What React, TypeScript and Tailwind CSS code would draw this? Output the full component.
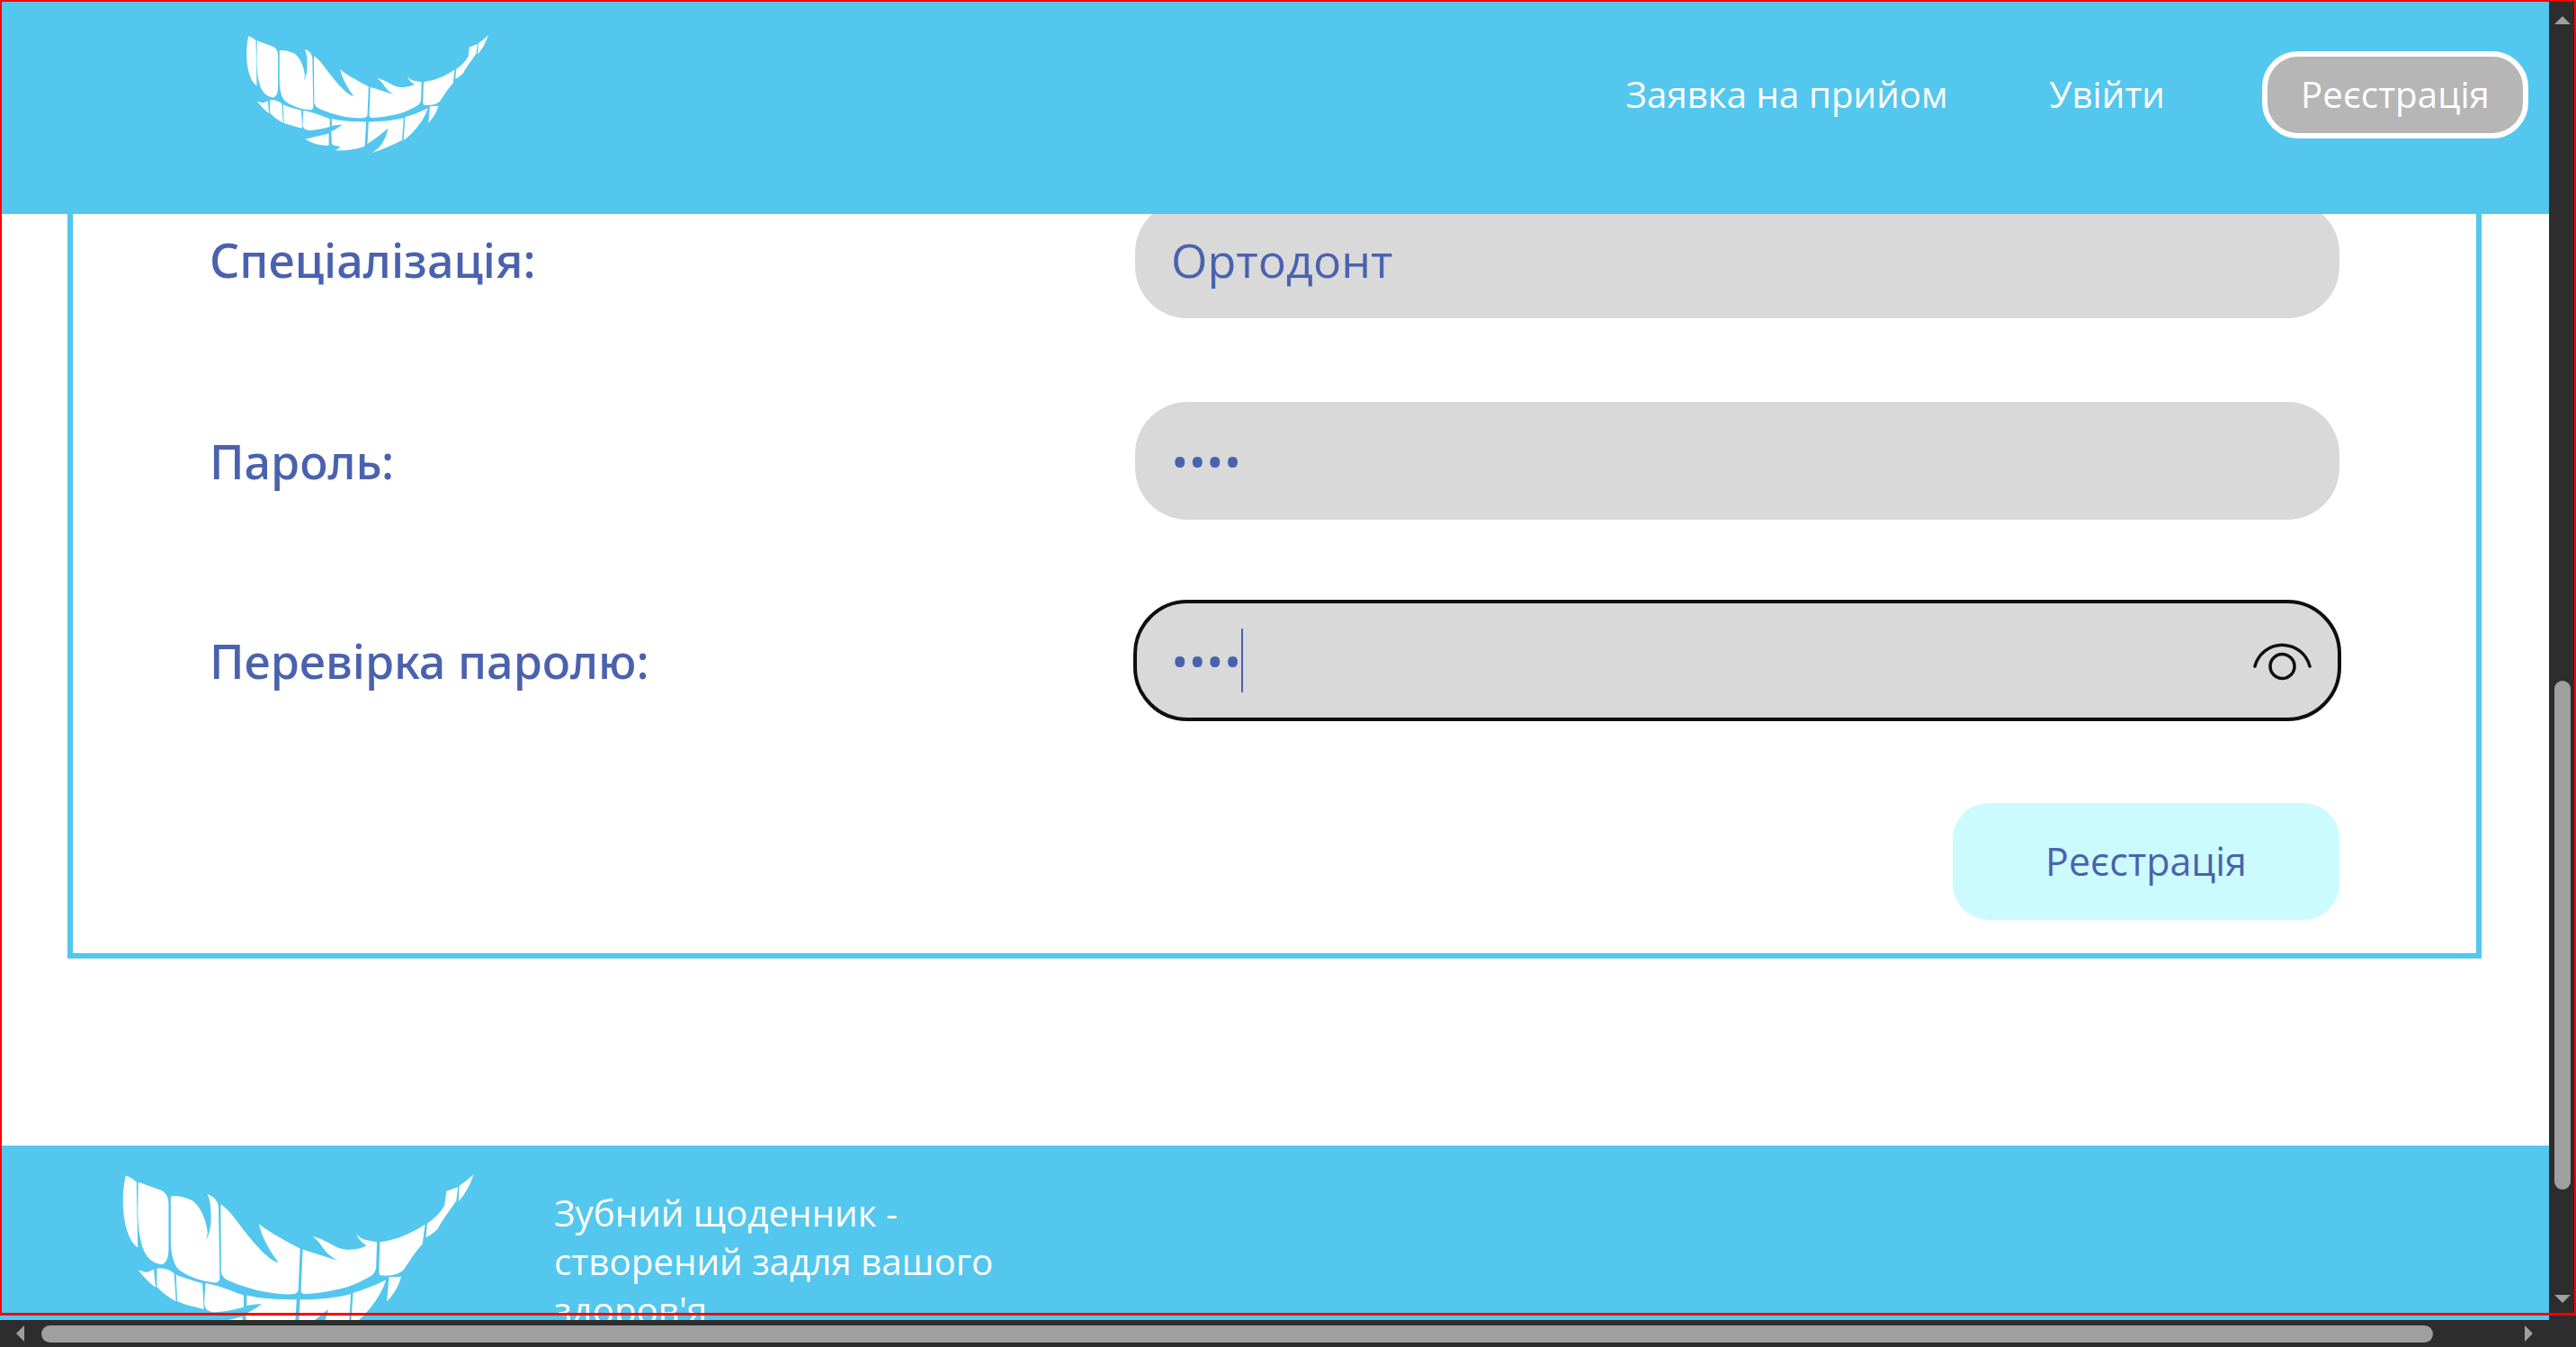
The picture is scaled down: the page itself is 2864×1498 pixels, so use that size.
const Logo = ({ className }: { className: string }) => (
  <svg viewBox="215 115 815 400" className={className} fill="#ffffff">
    <path d="M226,122 C236,125 245,130 251,137 L254,288 C235,275 222,240 220,190 C219,165 222,140 226,122Z" />
    <path d="M255,137 L305,155 C318,160 324,170 325,185 L325,290 C325,310 320,325 308,327 C290,325 275,312 268,295 C258,270 254,240 254,200Z" />
    <path d="M330,170 C340,167 360,170 380,180 C400,195 412,225 415,255 L411,270 C422,255 424,225 422,205 C422,190 420,175 414,165 C428,170 438,178 440,195 L443,360 C441,368 435,370 425,368 C400,365 370,355 350,340 C338,330 332,310 330,280Z" />
    <path d="M445,188 C465,200 480,225 500,250 C520,275 555,318 578,322 C558,295 540,265 533,233 C560,255 600,275 628,290 L624,385 C622,395 615,395 600,396 C560,395 510,385 465,365 C452,360 446,352 446,340Z" />
    <path d="M634,292 L715,318 C695,308 685,295 678,285 C672,275 665,268 656,262 C675,265 695,278 715,288 C740,297 765,292 782,283 C770,278 760,265 756,252 C762,268 780,272 805,275 L803,335 C800,350 790,355 775,362 C745,380 700,390 640,395 C632,395 630,390 630,385Z" />
    <path d="M812,275 C850,270 885,255 916,234 L910,280 C895,295 880,320 866,340 C855,350 835,355 815,352 C810,352 810,345 810,335Z" />
    <path d="M921,232 C935,222 950,210 961,190 L965,158 L992,148 L988,180 C975,200 955,225 945,245 C935,255 925,262 918,264Z" />
    <path d="M995,145 C1005,138 1020,128 1028,118 C1022,140 1005,170 993,182Z" />
    <path d="M255,340 L275,345 L291,338 L295,380 C280,370 268,355 255,340Z" />
    <path d="M298,336 C315,334 330,340 338,348 L342,412 C325,402 310,392 298,378Z" />
    <path d="M342,350 C360,358 385,365 403,370 L406,430 C385,425 365,420 345,412Z" />
    <path d="M410,370 C440,375 470,388 498,398 L498,425 C475,432 455,435 430,437 C415,435 408,430 407,415Z" />
    <path d="M505,398 C540,406 575,408 620,408 L615,490 C590,498 560,506 515,503 C525,500 530,495 533,490 C520,490 510,488 505,482 L503,440 C520,432 530,425 540,418 C530,418 510,420 505,422Z" />
    <path d="M495,447 L495,487 C465,488 440,480 416,466Z" />
    <path d="M628,408 C665,408 710,405 745,395 L740,470 C710,485 675,500 638,513 C665,498 685,470 693,430 C675,445 650,465 624,482Z" />
    <path d="M750,392 C775,385 800,375 826,362 C815,400 780,445 745,470Z" />
    <path d="M833,356 L861,355 C855,378 842,398 828,412Z" />
  </svg>
);

const EyeIcon = () => (
  <svg viewBox="0 0 70 46" className="absolute right-[26px] top-[40px] h-[46px] w-[70px]" fill="none" stroke="#0f0f0f" strokeWidth="3.5" strokeLinecap="round">
    <path d="M4 30 A31.5 31.5 0 0 1 65 30" />
    <circle cx="34.5" cy="30" r="13.5" />
  </svg>
);

const Arrow = ({ d, className }: { d: string; className: string }) => (
  <svg viewBox="0 0 18 18" className={className} fill="#9f9f9f" preserveAspectRatio="none">
    <path d={d} />
  </svg>
);

const labelClass = "w-[1029px] font-['Noto_Sans',sans-serif] text-[52px] font-medium";

export default function App() {
  return (
    <div className="relative flex h-[1498px] w-[2864px] flex-col overflow-hidden bg-[#2d2d2d] font-['Open_Sans',sans-serif]">
      <div className="flex h-[1468px] shrink-0">
        <div className="flex w-[2834px] flex-col overflow-hidden bg-white">
          <header className="relative z-10 flex h-[238px] shrink-0 items-start justify-between bg-[#53c7ee] pl-[272px] pr-[23px]">
            <Logo className="mt-[38px] h-[133px] w-[272px]" />
            <nav className="mt-[57px] flex items-center text-[40.3px] text-white">
              <a className="mr-[113px]">Заявка на прийом</a>
              <a className="mr-[108px]">Увійти</a>
              <a className="flex h-[97px] w-[296px] items-center justify-center rounded-[40px] border-[6px] border-white bg-[#b5b6b5]">Реєстрація</a>
            </nav>
          </header>

          <main className="-mt-[15px] mb-[208px] ml-[75px] mr-[75px] flex shrink-0 flex-col border-x-[6px] border-b-[6px] border-[#53c7ee] pb-[37px] pl-[152px] pr-[152px] text-[#4a62ae]">
            <div className="flex items-center">
              <label className={labelClass}>Спеціалізація:</label>
              <div className="flex h-[131px] flex-1 items-center rounded-[58px] bg-[#d9d9d9] px-[40px] text-[52px]">Ортодонт</div>
            </div>
            <div className="mt-[93px] flex items-center">
              <label className={labelClass}>Пароль:</label>
              <div className="flex h-[131px] flex-1 items-center rounded-[58px] bg-[#d9d9d9] px-[40px] text-[52px]">••••</div>
            </div>
            <div className="mt-[89px] flex items-center">
              <label className={labelClass}>Перевірка паролю:</label>
              <div className="relative -mx-[2px] flex h-[135px] flex-1 items-center rounded-[60px] border-4 border-[#0f0f0f] bg-[#d9d9d9] pl-[38px] text-[52px]">
                <span>••••</span>
                <span className="h-[71px] w-[2px] bg-[#4a62ae]" />
                <EyeIcon />
              </div>
            </div>
            <div className="mt-[91px] flex justify-end">
              <button className="h-[130px] w-[430px] rounded-[40px] bg-[#ccfbff] text-[43px]">Реєстрація</button>
            </div>
          </main>

          <footer className="flex h-[300px] shrink-0 items-start bg-[#53c7ee]">
            <Logo className="ml-[134px] mt-[30px] h-[193px] w-[394px] shrink-0" />
            <p className="ml-[88px] mt-[48px] w-[520px] text-[40.3px] leading-[54px] text-white">Зубний щоденник - створений задля вашого здоров'я</p>
          </footer>
        </div>

        <div className="flex w-[30px] flex-col items-center pt-[18px]">
          <Arrow d="M9 0 L18 18 L0 18Z" className="h-[9px] w-[18px]" />
          <div className="mt-[730px] h-[566px] w-[18px] shrink-0 rounded-full bg-[#9f9f9f]" />
          <Arrow d="M0 0 L18 0 L9 18Z" className="mt-[117px] h-[9px] w-[18px]" />
        </div>
      </div>

      <div className="flex h-[30px] items-center pl-[18px]">
        <Arrow d="M0 9 L18 0 L18 18Z" className="h-[18px] w-[9px]" />
        <div className="ml-[19px] h-[19px] w-[2659px] rounded-full bg-[#9f9f9f]" />
        <Arrow d="M0 0 L18 9 L0 18Z" className="ml-[102px] h-[18px] w-[9px]" />
      </div>

      <div className="pointer-events-none absolute left-0 top-0 z-20 h-[1463px] w-full border-x-2 border-b-[3px] border-t-2 border-[#ff0000]" />
    </div>
  );
}
